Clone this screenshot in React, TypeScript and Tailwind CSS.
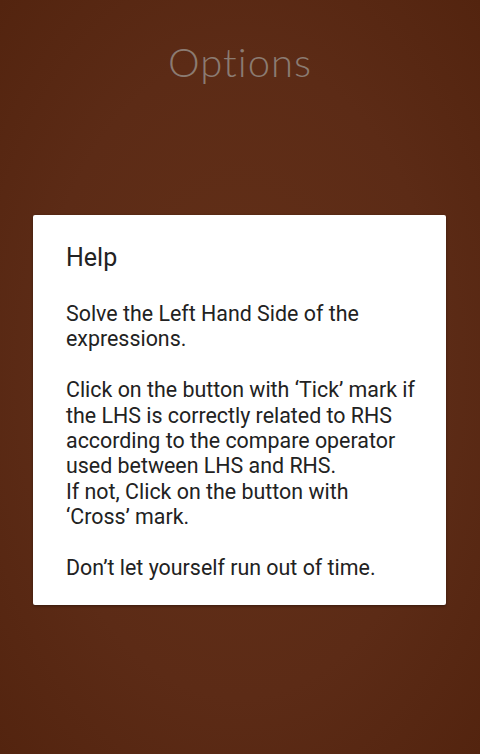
export default function App() {
  return (
    <div className="flex h-[754px] w-[480px] flex-col bg-[#5c2b16] bg-[radial-gradient(ellipse_at_center,#633018_0%,#5c2b16_60%,#53240f_100%)]">
      {/* Title */}
      <div className="flex h-[128px] items-start justify-center pt-[42px]">
        <h1
          className="text-[40px] font-light leading-none tracking-[1px] text-[#8b7b72]"
          style={{ fontFamily: '"Lato", "DejaVu Sans", sans-serif' }}
        >
          Options
        </h1>
      </div>

      {/* Help card */}
      <div className="mt-[87px] ml-[33px] w-[413px] rounded-[2px] bg-white shadow-[0_1px_3px_rgba(0,0,0,0.4)]">
        <div
          className="pl-[33px] pr-[31px] pt-[26px] pb-[25px] text-[#222222]"
          style={{ fontFamily: 'Roboto, "Noto Sans", sans-serif' }}
        >
          <h2 className="text-[25px] leading-[34px]">Help</h2>
          <div className="mt-[26px] text-[21.4px] leading-[25.4px]">
            <p>Solve the Left Hand Side of the expressions.</p>
            <p className="mt-[25.4px]">
              Click on the button with ‘Tick’ mark if the LHS is correctly related to RHS according to the compare operator used between LHS and RHS.
            </p>
            <p>If not, Click on the button with ‘Cross’ mark.</p>
            <p className="mt-[25.4px]">Don’t let yourself run out of time.</p>
          </div>
        </div>
      </div>
    </div>
  );
}
